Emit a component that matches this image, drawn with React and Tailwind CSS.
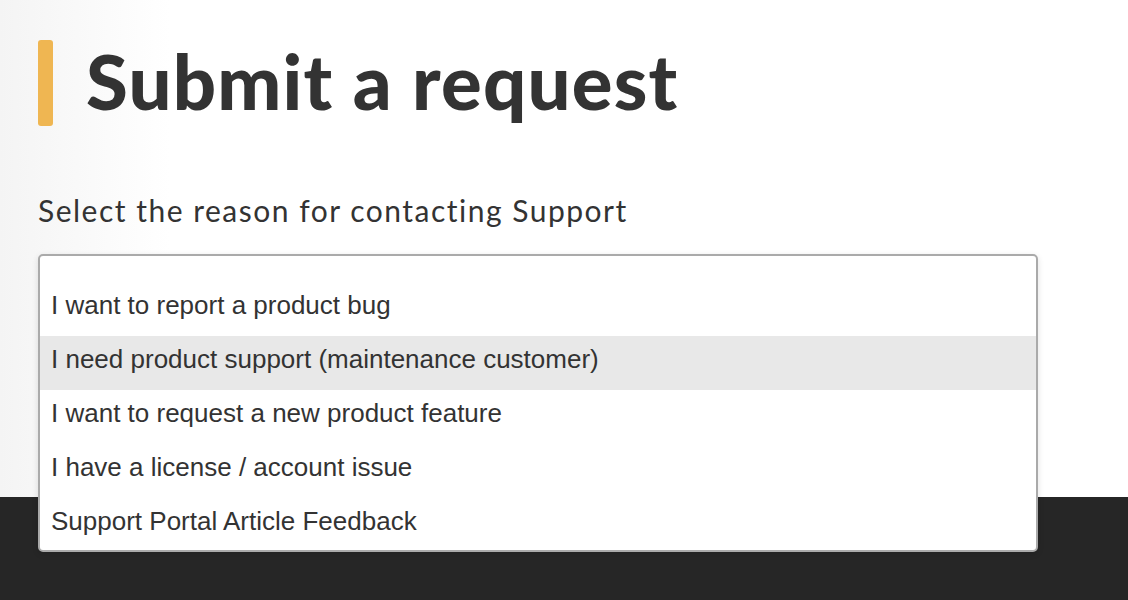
import React from "react";

const options = [
  "I want to report a product bug",
  "I need product support (maintenance customer)",
  "I want to request a new product feature",
  "I have a license / account issue",
  "Support Portal Article Feedback",
];

export default function App() {
  return (
    <div className="relative w-[1128px] h-[600px] overflow-hidden bg-white">
      <div className="h-[497px] bg-[linear-gradient(to_right,#f4f4f4,#ffffff_170px)] pl-[38px] pt-[40px]">
        <div className="flex items-center gap-[33px]">
          <div className="w-[15px] h-[86px] rounded-[3px] bg-[#efb652]" />
          <h1 className="font-['Lato',sans-serif] font-black text-[#333333] text-[76px] leading-none tracking-[1.2px] -mt-[4px]">
            Submit a request
          </h1>
        </div>
        <div className="mt-[69px] font-['Lato',sans-serif] text-[30px] leading-none tracking-[1.5px] text-[#333333]">
          Select the reason for contacting Support
        </div>
        <div className="relative mt-[29px] w-[1000px]">
          <div className="absolute left-0 top-0 w-[1000px] rounded-[5px] border-2 border-[#aaaaaa] bg-white shadow-[0_2px_6px_rgba(0,0,0,0.12)] overflow-hidden font-['Liberation_Sans',Arial,sans-serif] text-[26px] text-[#333333]">
            <div className="h-[26px]" />
            {options.map((o, i) => (
              <div
                key={o}
                className={`h-[54px] flex items-center pl-[11px] pb-[7px] last:h-[52px] last:pb-[5px] ${i === 1 ? "bg-[#e8e8e8]" : ""}`}
              >
                {o}
              </div>
            ))}
          </div>
        </div>
      </div>
      <div className="h-[103px] bg-[#262626]" />
    </div>
  );
}
